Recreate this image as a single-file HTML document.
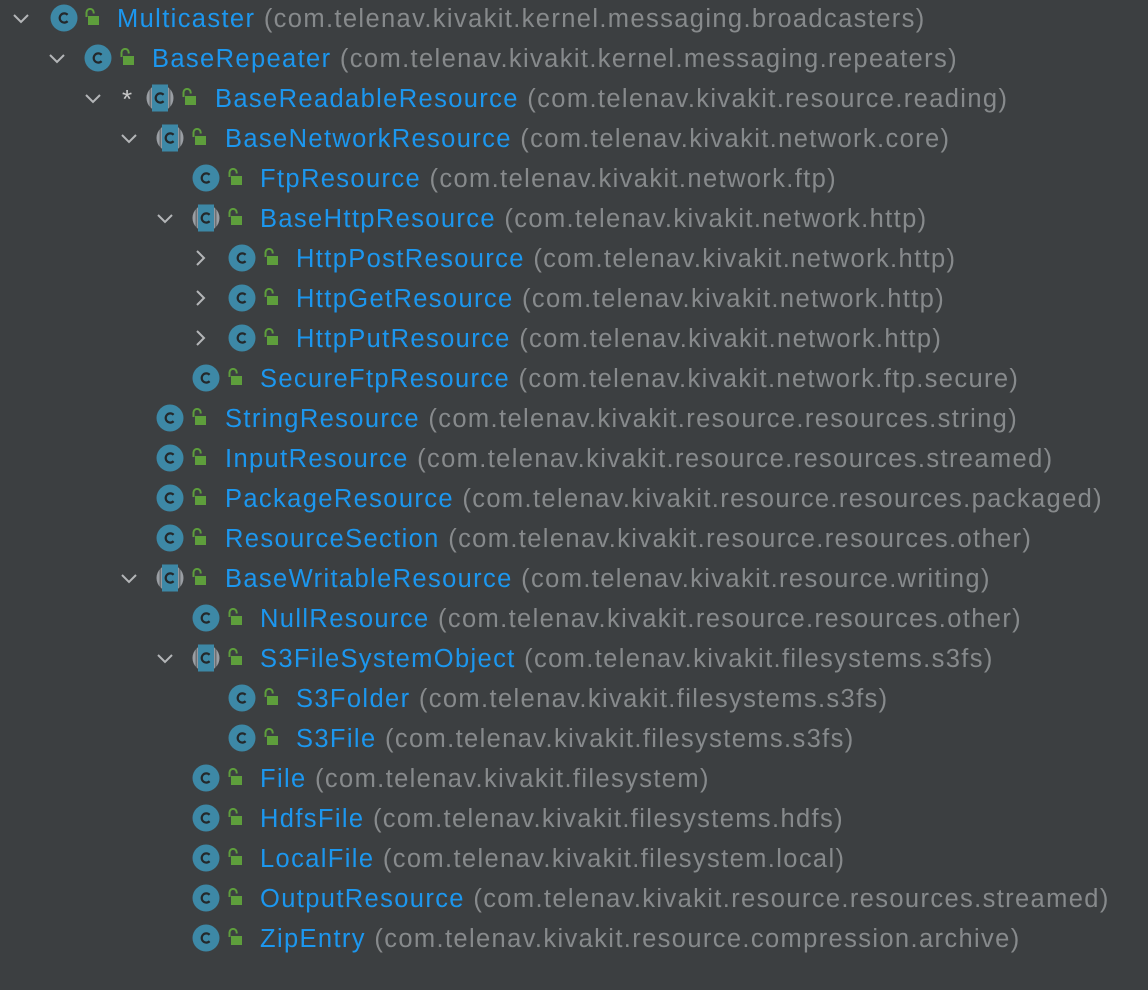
<!DOCTYPE html>
<html><head><meta charset="utf-8"><style>
body{margin:0;width:1148px;height:990px;background:#3c3f41;overflow:hidden;font-family:"Liberation Sans",sans-serif;}
.r{position:absolute;left:0;height:40px;width:1148px}
.r svg{position:absolute}
.t{position:absolute;top:3px;font-size:25.5px;line-height:32px;letter-spacing:1.37px;white-space:nowrap;color:#1c97ef}
.t span{color:#878a8c}
.star{position:absolute;top:3px;color:#c8c8c8;font-size:26px;line-height:32px}
</style></head><body>
<svg width="0" height="0" style="position:absolute">
<defs>
<g id="c"><circle cx="14" cy="14" r="13.5" fill="#3d88a6"/><path d="M17.6 10.8 A4.6 4.6 0 1 0 17.6 17.2" fill="none" stroke="#24282b" stroke-width="2.2"/></g>
<g id="a"><circle cx="14" cy="14" r="13.5" fill="#9a9ea3"/><rect x="3.5" y="3" width="1.6" height="22" fill="#3c3f41" opacity="0.5"/><rect x="22.9" y="3" width="1.6" height="22" fill="#3c3f41" opacity="0.5"/><rect x="6" y="0.5" width="16" height="27" fill="#3d88a6"/><path d="M17.6 10.8 A4.6 4.6 0 1 0 17.6 17.2" fill="none" stroke="#24282b" stroke-width="2.2"/></g>
<g id="l"><path d="M2.5 9 V4.5 A3.6 3.6 0 0 1 9.7 4.5 V5.5" fill="none" stroke="#5e9e3c" stroke-width="2"/><rect x="4" y="8" width="11" height="9" fill="#5e9e3c"/></g>
<g id="d"><path d="M1 1 L8 8 L15 1" fill="none" stroke="#b4b6b8" stroke-width="2"/></g>
<g id="rt"><path d="M1 1 L8 8 L1 15" fill="none" stroke="#b4b6b8" stroke-width="2"/></g>
</defs></svg>

<div class="r" style="top:0"><svg style="left:13px;top:14px" width="17" height="10"><use href="#d"/></svg><svg style="left:50px;top:4px" width="28" height="28"><use href="#c"/></svg><svg style="left:84px;top:8px" width="17" height="18"><use href="#l"/></svg><div class="t" style="left:117px">Multicaster <span>(com.telenav.kivakit.kernel.messaging.broadcasters)</span></div></div>
<div class="r" style="top:40px"><svg style="left:49px;top:14px" width="17" height="10"><use href="#d"/></svg><svg style="left:84px;top:4px" width="28" height="28"><use href="#c"/></svg><svg style="left:119px;top:8px" width="17" height="18"><use href="#l"/></svg><div class="t" style="left:152px">BaseRepeater <span>(com.telenav.kivakit.kernel.messaging.repeaters)</span></div></div>
<div class="r" style="top:80px"><svg style="left:85px;top:14px" width="17" height="10"><use href="#d"/></svg><div class="star" style="left:122px">*</div><svg style="left:146px;top:4px" width="28" height="28"><use href="#a"/></svg><svg style="left:181px;top:8px" width="17" height="18"><use href="#l"/></svg><div class="t" style="left:215px">BaseReadableResource <span>(com.telenav.kivakit.resource.reading)</span></div></div>
<div class="r" style="top:120px"><svg style="left:121px;top:14px" width="17" height="10"><use href="#d"/></svg><svg style="left:156px;top:4px" width="28" height="28"><use href="#a"/></svg><svg style="left:191px;top:8px" width="17" height="18"><use href="#l"/></svg><div class="t" style="left:225px">BaseNetworkResource <span>(com.telenav.kivakit.network.core)</span></div></div>
<div class="r" style="top:160px"><svg style="left:192px;top:4px" width="28" height="28"><use href="#c"/></svg><svg style="left:227px;top:8px" width="17" height="18"><use href="#l"/></svg><div class="t" style="left:260px">FtpResource <span>(com.telenav.kivakit.network.ftp)</span></div></div>
<div class="r" style="top:200px"><svg style="left:157px;top:14px" width="17" height="10"><use href="#d"/></svg><svg style="left:192px;top:4px" width="28" height="28"><use href="#a"/></svg><svg style="left:227px;top:8px" width="17" height="18"><use href="#l"/></svg><div class="t" style="left:260px">BaseHttpResource <span>(com.telenav.kivakit.network.http)</span></div></div>
<div class="r" style="top:240px"><svg style="left:196px;top:10px" width="10" height="17"><use href="#rt"/></svg><svg style="left:228px;top:4px" width="28" height="28"><use href="#c"/></svg><svg style="left:263px;top:8px" width="17" height="18"><use href="#l"/></svg><div class="t" style="left:296px">HttpPostResource <span>(com.telenav.kivakit.network.http)</span></div></div>
<div class="r" style="top:280px"><svg style="left:196px;top:10px" width="10" height="17"><use href="#rt"/></svg><svg style="left:228px;top:4px" width="28" height="28"><use href="#c"/></svg><svg style="left:263px;top:8px" width="17" height="18"><use href="#l"/></svg><div class="t" style="left:296px">HttpGetResource <span>(com.telenav.kivakit.network.http)</span></div></div>
<div class="r" style="top:320px"><svg style="left:196px;top:10px" width="10" height="17"><use href="#rt"/></svg><svg style="left:228px;top:4px" width="28" height="28"><use href="#c"/></svg><svg style="left:263px;top:8px" width="17" height="18"><use href="#l"/></svg><div class="t" style="left:296px">HttpPutResource <span>(com.telenav.kivakit.network.http)</span></div></div>
<div class="r" style="top:360px"><svg style="left:192px;top:4px" width="28" height="28"><use href="#c"/></svg><svg style="left:227px;top:8px" width="17" height="18"><use href="#l"/></svg><div class="t" style="left:260px">SecureFtpResource <span>(com.telenav.kivakit.network.ftp.secure)</span></div></div>
<div class="r" style="top:400px"><svg style="left:156px;top:4px" width="28" height="28"><use href="#c"/></svg><svg style="left:191px;top:8px" width="17" height="18"><use href="#l"/></svg><div class="t" style="left:225px">StringResource <span>(com.telenav.kivakit.resource.resources.string)</span></div></div>
<div class="r" style="top:440px"><svg style="left:156px;top:4px" width="28" height="28"><use href="#c"/></svg><svg style="left:191px;top:8px" width="17" height="18"><use href="#l"/></svg><div class="t" style="left:225px">InputResource <span>(com.telenav.kivakit.resource.resources.streamed)</span></div></div>
<div class="r" style="top:480px"><svg style="left:156px;top:4px" width="28" height="28"><use href="#c"/></svg><svg style="left:191px;top:8px" width="17" height="18"><use href="#l"/></svg><div class="t" style="left:225px">PackageResource <span>(com.telenav.kivakit.resource.resources.packaged)</span></div></div>
<div class="r" style="top:520px"><svg style="left:156px;top:4px" width="28" height="28"><use href="#c"/></svg><svg style="left:191px;top:8px" width="17" height="18"><use href="#l"/></svg><div class="t" style="left:225px">ResourceSection <span>(com.telenav.kivakit.resource.resources.other)</span></div></div>
<div class="r" style="top:560px"><svg style="left:121px;top:14px" width="17" height="10"><use href="#d"/></svg><svg style="left:156px;top:4px" width="28" height="28"><use href="#a"/></svg><svg style="left:191px;top:8px" width="17" height="18"><use href="#l"/></svg><div class="t" style="left:225px">BaseWritableResource <span>(com.telenav.kivakit.resource.writing)</span></div></div>
<div class="r" style="top:600px"><svg style="left:192px;top:4px" width="28" height="28"><use href="#c"/></svg><svg style="left:227px;top:8px" width="17" height="18"><use href="#l"/></svg><div class="t" style="left:260px">NullResource <span>(com.telenav.kivakit.resource.resources.other)</span></div></div>
<div class="r" style="top:640px"><svg style="left:157px;top:14px" width="17" height="10"><use href="#d"/></svg><svg style="left:192px;top:4px" width="28" height="28"><use href="#a"/></svg><svg style="left:227px;top:8px" width="17" height="18"><use href="#l"/></svg><div class="t" style="left:260px">S3FileSystemObject <span>(com.telenav.kivakit.filesystems.s3fs)</span></div></div>
<div class="r" style="top:680px"><svg style="left:228px;top:4px" width="28" height="28"><use href="#c"/></svg><svg style="left:263px;top:8px" width="17" height="18"><use href="#l"/></svg><div class="t" style="left:296px">S3Folder <span>(com.telenav.kivakit.filesystems.s3fs)</span></div></div>
<div class="r" style="top:720px"><svg style="left:228px;top:4px" width="28" height="28"><use href="#c"/></svg><svg style="left:263px;top:8px" width="17" height="18"><use href="#l"/></svg><div class="t" style="left:296px">S3File <span>(com.telenav.kivakit.filesystems.s3fs)</span></div></div>
<div class="r" style="top:760px"><svg style="left:192px;top:4px" width="28" height="28"><use href="#c"/></svg><svg style="left:227px;top:8px" width="17" height="18"><use href="#l"/></svg><div class="t" style="left:260px">File <span>(com.telenav.kivakit.filesystem)</span></div></div>
<div class="r" style="top:800px"><svg style="left:192px;top:4px" width="28" height="28"><use href="#c"/></svg><svg style="left:227px;top:8px" width="17" height="18"><use href="#l"/></svg><div class="t" style="left:260px">HdfsFile <span>(com.telenav.kivakit.filesystems.hdfs)</span></div></div>
<div class="r" style="top:840px"><svg style="left:192px;top:4px" width="28" height="28"><use href="#c"/></svg><svg style="left:227px;top:8px" width="17" height="18"><use href="#l"/></svg><div class="t" style="left:260px">LocalFile <span>(com.telenav.kivakit.filesystem.local)</span></div></div>
<div class="r" style="top:880px"><svg style="left:192px;top:4px" width="28" height="28"><use href="#c"/></svg><svg style="left:227px;top:8px" width="17" height="18"><use href="#l"/></svg><div class="t" style="left:260px">OutputResource <span>(com.telenav.kivakit.resource.resources.streamed)</span></div></div>
<div class="r" style="top:920px"><svg style="left:192px;top:4px" width="28" height="28"><use href="#c"/></svg><svg style="left:227px;top:8px" width="17" height="18"><use href="#l"/></svg><div class="t" style="left:260px">ZipEntry <span>(com.telenav.kivakit.resource.compression.archive)</span></div></div>
</body></html>
